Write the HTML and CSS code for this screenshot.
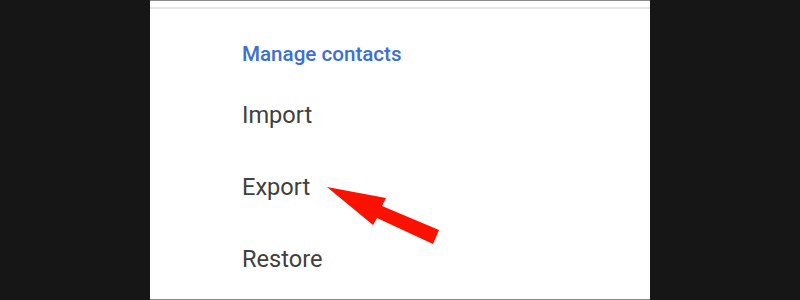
FILE: index.html
```html
<!DOCTYPE html>
<html>
<head>
<meta charset="utf-8">
<link rel="stylesheet" href="styles.css">
</head>
<body>
<div class="frame">
  <div class="panel">
    <div class="divider"></div>
    <div class="menu">
      <div class="heading">Manage contacts</div>
      <div class="item">Import</div>
      <div class="item">Export</div>
      <div class="item">Restore</div>
    </div>
  </div>
  <svg class="arrow" width="800" height="300" viewBox="0 0 800 300">
    <polygon fill="#fb1100" points="327,187 386,198 382,206 439,230 433,244 377,218 373,225"/>
  </svg>
</div>
</body>
</html>
```

FILE: styles.css
```css
html, body {
  margin: 0;
  padding: 0;
}
body {
  background: #161616;
  font-family: Roboto, "Liberation Sans", sans-serif;
}
.frame {
  position: relative;
  width: 800px;
  height: 300px;
  box-sizing: border-box;
  background: #161616;
  display: flex;
  justify-content: flex-start;
  overflow: hidden;
}
.panel {
  margin-left: 150px;
  width: 500px;
  height: 300px;
  box-sizing: border-box;
  background: #ffffff;
  border-top: 1px solid #8c8c8c;
  border-bottom: 1px solid #8c8c8c;
  display: flex;
  flex-direction: column;
}
.divider {
  margin-top: 6px;
  height: 2px;
  background: #e6e6e6;
}
.menu {
  padding-left: 92px;
  padding-top: 33px;
  display: flex;
  flex-direction: column;
}
.heading {
  font-size: 20.6px;
  font-weight: 500;
  line-height: 24px;
  color: #3b6fd6;
  margin-bottom: 13px;
}
.item {
  height: 72px;
  line-height: 72px;
  font-size: 23.6px;
  color: #404040;
}
.arrow {
  position: absolute;
  left: 0;
  top: 0;
}
```
